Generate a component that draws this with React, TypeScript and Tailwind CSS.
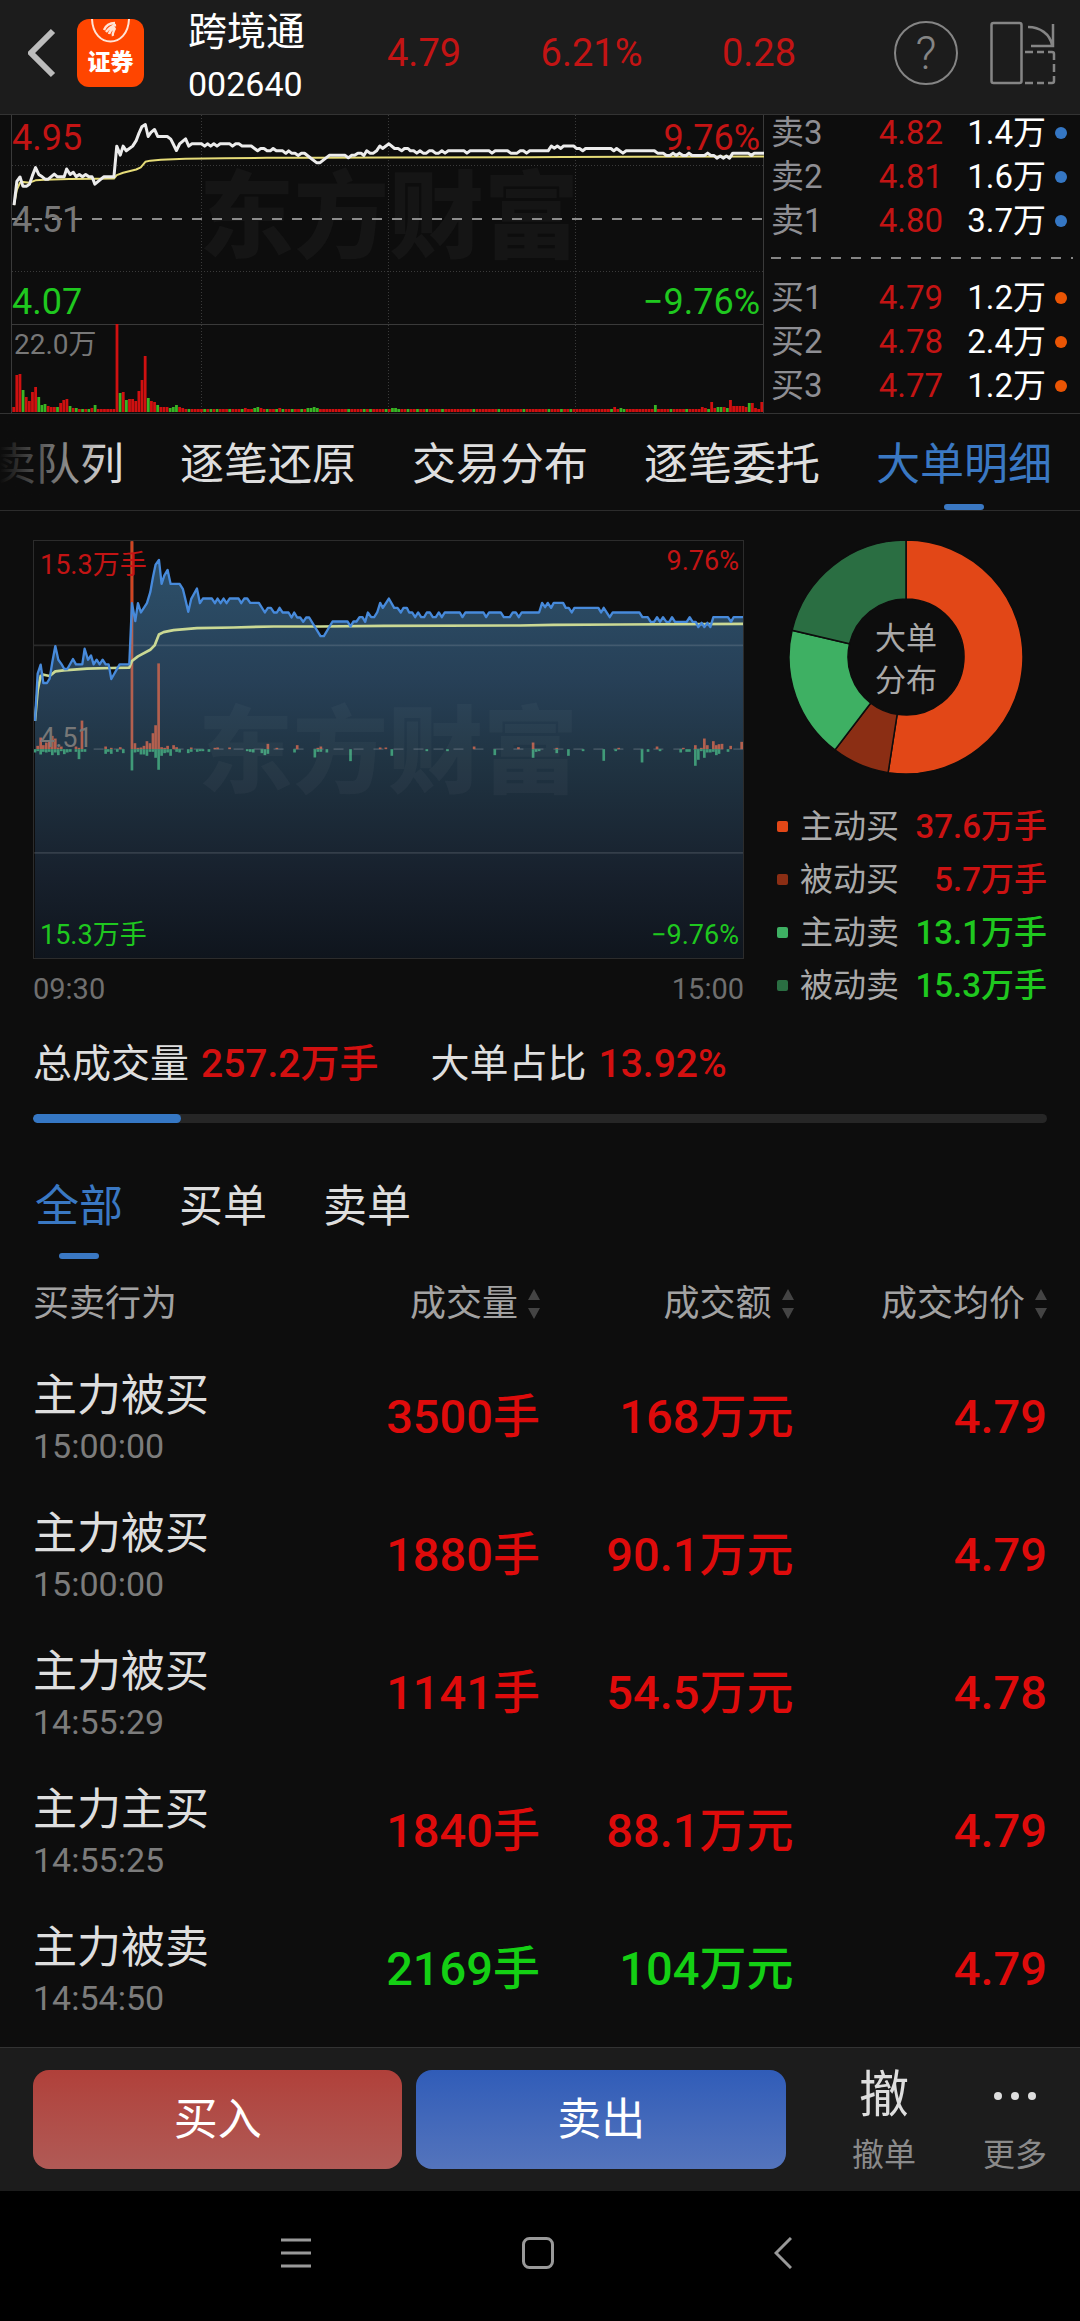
import { useState } from 'react';
import clsx from 'clsx';

type Point = [number, number];

interface Quote {
  label: string;
  price: string;
  amount: string;
  dot: string;
}

interface Deal {
  action: string;
  time: string;
  volume: string;
  turnover: string;
  price: string;
  up: boolean;
}

const sellQuotes: Quote[] = [
  { label: '卖3', price: '4.82', amount: '1.4万', dot: 'bg-[#3577c4]' },
  { label: '卖2', price: '4.81', amount: '1.6万', dot: 'bg-[#3577c4]' },
  { label: '卖1', price: '4.80', amount: '3.7万', dot: 'bg-[#3577c4]' },
];

const buyQuotes: Quote[] = [
  { label: '买1', price: '4.79', amount: '1.2万', dot: 'bg-[#ea5504]' },
  { label: '买2', price: '4.78', amount: '2.4万', dot: 'bg-[#ea5504]' },
  { label: '买3', price: '4.77', amount: '1.2万', dot: 'bg-[#ea5504]' },
];

const sections = ['卖队列', '逐笔还原', '交易分布', '逐笔委托', '大单明细'];
const filters = ['全部', '买单', '卖单'];

const distribution = [
  { label: '主动买', value: 37.6, fill: '#e24717', dot: 'bg-[#e24717]', text: 'text-[#cc1212]' },
  { label: '被动买', value: 5.7, fill: '#8b2e14', dot: 'bg-[#8b2e14]', text: 'text-[#cc1212]' },
  { label: '主动卖', value: 13.1, fill: '#3eb063', dot: 'bg-[#3eb063]', text: 'text-[#1fc81f]' },
  { label: '被动卖', value: 15.3, fill: '#2a6e42', dot: 'bg-[#2a6e42]', text: 'text-[#1fc81f]' },
];

const deals: Deal[] = [
  { action: '主力被买', time: '15:00:00', volume: '3500手', turnover: '168万元', price: '4.79', up: true },
  { action: '主力被买', time: '15:00:00', volume: '1880手', turnover: '90.1万元', price: '4.79', up: true },
  { action: '主力被买', time: '14:55:29', volume: '1141手', turnover: '54.5万元', price: '4.78', up: true },
  { action: '主力主买', time: '14:55:25', volume: '1840手', turnover: '88.1万元', price: '4.79', up: true },
  { action: '主力被卖', time: '14:54:50', volume: '2169手', turnover: '104万元', price: '4.79', up: false },
];

// Plot area shared by both charts: x 41..2169, y 31..1285, previous close at 658
const priceLine: Point[] = [
  [44, 572], [52, 430], [61, 403], [69, 458], [80, 458], [88, 445], [96, 395], [105, 347], [114, 388],
  [124, 402], [132, 416], [141, 416], [158, 386], [167, 402], [186, 402], [193, 355], [203, 388],
  [212, 375], [220, 402], [229, 388], [238, 402], [247, 388], [256, 402], [265, 402], [273, 446],
  [298, 402], [327, 402], [335, 218], [345, 272], [353, 218], [362, 246], [380, 218], [390, 185],
  [398, 140], [406, 102], [416, 88], [424, 160], [432, 135], [442, 118], [451, 160], [478, 160],
  [488, 176], [495, 205], [504, 244], [513, 205], [530, 174], [539, 218], [548, 204], [575, 204],
  [584, 218], [592, 204], [601, 218], [610, 204], [619, 218], [628, 204], [655, 204], [663, 218],
  [672, 204], [681, 204], [690, 217], [716, 217], [734, 246], [743, 232], [752, 232], [761, 246],
  [770, 246], [778, 232], [787, 246], [805, 246], [814, 261], [822, 246], [831, 261], [840, 261],
  [849, 274], [858, 261], [867, 261], [884, 289], [901, 317], [911, 317], [937, 273], [982, 273],
  [991, 288], [1000, 273], [1009, 273], [1018, 260], [1027, 260], [1035, 274], [1043, 246],
  [1053, 260], [1062, 260], [1071, 246], [1080, 217], [1088, 232], [1106, 204], [1122, 232],
  [1132, 232], [1142, 246], [1150, 232], [1160, 232], [1167, 246], [1176, 246], [1185, 260],
  [1194, 246], [1203, 260], [1212, 260], [1220, 246], [1229, 246], [1238, 260], [1247, 260],
  [1256, 246], [1265, 260], [1274, 246], [1319, 246], [1327, 260], [1336, 246], [1390, 246],
  [1398, 260], [1407, 246], [1442, 246], [1451, 260], [1469, 260], [1478, 246], [1487, 246],
  [1496, 260], [1505, 246], [1557, 246], [1566, 217], [1575, 230], [1583, 217], [1593, 232],
  [1601, 217], [1629, 217], [1637, 232], [1646, 232], [1655, 246], [1663, 232], [1735, 232],
  [1743, 246], [1751, 232], [1769, 260], [1778, 246], [1858, 246], [1867, 260], [1883, 260],
  [1892, 274], [1902, 274], [1911, 260], [1920, 274], [1929, 260], [1939, 274], [1948, 274],
  [1956, 260], [1965, 274], [2000, 274], [2009, 260], [2018, 274], [2027, 274], [2035, 290],
  [2045, 277], [2053, 290], [2062, 277], [2071, 290], [2080, 260], [2124, 260], [2133, 274],
  [2141, 260], [2169, 260],
];

const averageLine: Point[] = [
  [44, 572], [52, 480], [61, 437], [70, 433], [88, 437], [105, 423], [130, 420], [200, 415],
  [273, 413], [327, 412], [335, 392], [353, 378], [390, 358], [403, 345], [416, 312], [430, 305],
  [460, 299], [530, 293], [640, 291], [760, 288], [900, 288], [1090, 286], [1500, 285],
  [1600, 283], [1800, 282], [2169, 280],
];

// [x, bought, sold]
const bigOrders: [number, number, number][] = [
  [44, 0, 10], [52, 10, 6], [61, 35, 16], [69, 12, 8], [78, 20, 10], [87, 22, 8], [96, 40, 18],
  [105, 32, 10], [114, 5, 18], [123, 8, 6], [132, 0, 15], [141, 0, 10], [150, 0, 8], [167, 8, 8],
  [176, 4, 30], [185, 86, 8], [194, 0, 8], [256, 8, 14], [264, 0, 8], [273, 4, 14], [291, 0, 8],
  [300, 6, 0], [309, 0, 12], [335, 625, 64], [344, 18, 10], [353, 4, 8], [362, 5, 16],
  [371, 10, 16], [380, 24, 20], [389, 18, 8], [398, 48, 8], [406, 72, 26], [415, 258, 62],
  [424, 6, 20], [433, 4, 12], [442, 10, 10], [451, 0, 20], [460, 12, 0], [469, 6, 8], [478, 0, 10],
  [504, 0, 12], [513, 5, 8], [531, 0, 8], [540, 0, 6], [548, 0, 6], [566, 0, 8], [584, 4, 0],
  [592, 5, 0], [628, 5, 0], [681, 0, 6], [690, 0, 8], [699, 0, 10], [725, 0, 12], [734, 0, 18],
  [743, 16, 14], [770, 4, 0], [823, 0, 10], [831, 12, 0], [884, 0, 25], [893, 4, 8], [902, 8, 8],
  [920, 0, 10], [991, 0, 36], [1080, 5, 0], [1097, 5, 0], [1115, 0, 20], [1220, 0, 6],
  [1282, 0, 6], [1362, 8, 0], [1424, 0, 18], [1495, 6, 0], [1539, 20, 26], [1548, 0, 8],
  [1557, 0, 6], [1610, 4, 12], [1645, 0, 20], [1689, 0, 6], [1751, 0, 35], [1787, 0, 6],
  [1796, 4, 0], [1866, 0, 40], [1884, 0, 8], [1911, 8, 0], [1920, 0, 6], [1982, 0, 10],
  [1990, 4, 0], [2000, 0, 8], [2008, 0, 8], [2026, 12, 50], [2035, 0, 32], [2044, 4, 6],
  [2053, 32, 26], [2062, 12, 10], [2071, 0, 10], [2080, 24, 8], [2089, 12, 18], [2097, 15, 14],
  [2106, 16, 0], [2124, 0, 8], [2132, 10, 0], [2165, 22, 0],
];

// Minute volumes that rise above the floor, by minute of the session
const volumePeaks: Record<number, number> = {
  0: 5, 1: 37, 2: 38, 3: 22, 4: 15, 5: 11, 6: 20, 7: 25, 8: 15, 9: 7, 10: 8, 11: 6, 12: 5, 13: 5,
  14: 5, 15: 9, 16: 12, 17: 13, 18: 6, 19: 4, 20: 4, 25: 4, 26: 7, 33: 88, 34: 19, 35: 20, 36: 12,
  37: 13, 38: 13, 39: 11, 40: 21, 41: 32, 42: 56, 43: 14, 44: 11, 45: 10, 46: 7, 47: 5, 48: 5,
  49: 5, 50: 4, 51: 5, 52: 7, 53: 5, 54: 4, 74: 4, 77: 4, 78: 5, 79: 4, 85: 4, 94: 4, 95: 4, 96: 5,
  97: 4, 121: 4, 122: 4, 192: 5, 194: 4, 205: 7, 220: 5, 221: 4, 223: 10, 224: 4, 225: 5, 226: 5,
  227: 5, 228: 4, 229: 12, 230: 6, 231: 6, 232: 6, 233: 6, 234: 5, 235: 9, 236: 9, 237: 4, 239: 10,
};

const fallingMinutes = new Set([
  3, 8, 9, 10, 14, 18, 20, 22, 24, 26, 34, 36, 43, 46, 50, 51, 52, 56, 61, 63, 65, 69, 73, 77, 78,
  81, 84, 86, 89, 92, 94, 95, 96, 97, 107, 112, 114, 119, 121, 122, 123, 126, 129, 132, 137, 147,
  155, 163, 171, 175, 178, 191, 194, 195, 205, 210, 215, 222, 225, 226, 228, 235,
]);

const toPoints = (line: Point[]) => line.map(([x, y]) => `${x},${y}`).join(' ');

function Watermark({ className }: { className: string }) {
  return (
    <span aria-hidden="true" className={clsx('absolute text-[95px] leading-none font-black whitespace-nowrap', className)}>
      东方财富
    </span>
  );
}

function Header() {
  return (
    <header className="flex h-[115px] items-center border-b border-[#333] bg-[#1c1c1c] pb-2 pl-7 pr-6">
      <button aria-label="返回" className="h-[50px] w-7">
        <svg viewBox="0 0 28 50" className="h-full w-full" fill="none" stroke="#bcbcbc" strokeWidth="6">
          <path d="M25 3 3 25l22 22" />
        </svg>
      </button>
      <div className="relative ml-[21px] flex h-[68px] w-[67px] items-end justify-center overflow-hidden rounded-xl bg-[#ff4500] pb-2.5">
        <svg viewBox="0 0 67 30" className="absolute left-0 top-0 w-full" fill="none" stroke="#ffe3d6" strokeWidth="2">
          <path d="M15 0c1 30 36 30 37 0" />
          <path d="M27 11c2-5 6-7 11-7M29 13c3-4 5-6 10-7M32 15c1-4 3-5 6-7M36 17c-1-3 1-5 2-8" strokeWidth="2.4" />
        </svg>
        <span className="text-[23px] leading-7 font-black text-white">证券</span>
      </div>
      <div className="ml-11 mt-2.5 text-white">
        <h1 className="text-[39px] leading-[52px]">跨境通</h1>
        <p className="text-[34px] leading-[52px]">002640</p>
      </div>
      <div className="flex flex-1 justify-between pl-[82px] pr-[98px] text-[38px] leading-[52px] text-[#c31414]">
        <span>4.79</span>
        <span>6.21%</span>
        <span>0.28</span>
      </div>
      <button aria-label="帮助" className="flex size-16 items-center justify-center rounded-full border-2 border-[#858585] text-[46px] leading-none font-light text-[#858585]">
        ?
      </button>
      <button aria-label="横屏" className="ml-8 h-16 w-[66px]">
        <svg viewBox="0 0 66 64" className="h-full w-full" fill="none" stroke="#858585" strokeWidth="2.5">
          <rect x="1.5" y="2" width="30" height="60" rx="2" />
          <path d="M38 6c12 0 22 7 24 18M63 3v22H41" />
          <path d="M35 31h8M47 31h7M58 31h4q2 0 2 2v6M64 43v8M64 55v5q0 2-2 2h-4M54 62h-7M43 62h-8" />
        </svg>
      </button>
    </header>
  );
}

function MinuteChart() {
  return (
    <div className="relative flex-1 text-[36px] leading-10">
      <Watermark className="left-[199px] top-[56px] text-[#151515]" />
      <svg viewBox="0 0 764 298" preserveAspectRatio="none" className="absolute inset-0 h-full w-full">
        <g stroke="#3a3a3a">
          <path d="M11.5 0v298M763.5 0v298M12 209.5h752" />
          <path d="M201.5 0v298M388.5 0v298M575.5 0v298M12 50.5h752M12 156.5h752" strokeDasharray="1 2" />
        </g>
        <path d="M12 104h752" stroke="#8c8c8c" strokeWidth="2" strokeDasharray="10 10" />
        {Array.from({ length: 240 }, (_, i) => {
          const height = volumePeaks[i] ?? 3;
          return (
            <rect
              key={i}
              x={12.3 + i * 3.13}
              y={297 - height}
              width="2.8"
              height={height}
              fill={fallingMinutes.has(i) ? '#38b424' : '#cf1010'}
            />
          );
        })}
        <g transform="translate(-1.5 -5.2) scale(.353 .1667)" fill="none" strokeWidth="2" strokeLinejoin="round">
          <polyline points={toPoints(averageLine)} stroke="#e6dc78" vectorEffect="non-scaling-stroke" />
          <polyline points={toPoints(priceLine)} stroke="#ececec" strokeWidth="3" vectorEffect="non-scaling-stroke" />
        </g>
      </svg>
      <span className="absolute left-3 top-[3px] text-[#c31414]">4.95</span>
      <span className="absolute left-3 top-[85px] text-[#777]">4.51</span>
      <span className="absolute left-3 top-[167px] text-[#1fc81f]">4.07</span>
      <span className="absolute left-[14px] top-[210px] text-[28px] text-[#777]">22.0万</span>
      <span className="absolute right-1 top-[3px] text-[#c31414]">9.76%</span>
      <span className="absolute right-1 top-[167px] text-[#1fc81f]">−9.76%</span>
    </div>
  );
}

function QuoteRow({ quote }: { quote: Quote }) {
  return (
    <li className="grid grid-cols-[60px_1fr_103px_21px] items-center text-right text-[33px] leading-9">
      <span className="text-left text-[#8e8e93]">{quote.label}</span>
      <span className="text-[#c31414]">{quote.price}</span>
      <span className="text-white">{quote.amount}</span>
      <i className={clsx('size-3 justify-self-end rounded-full', quote.dot)} />
    </li>
  );
}

function QuotePanel() {
  return (
    <section className="flex h-[299px] border-b border-[#333]">
      <MinuteChart />
      <div className="w-[316px] pl-[7px] pr-[13px]">
        <ul className="flex flex-col gap-2">
          {sellQuotes.map((quote) => (
            <QuoteRow key={quote.label} quote={quote} />
          ))}
        </ul>
        <div className="-mr-1.5 mb-[21px] mt-[18px] h-0.5 bg-[repeating-linear-gradient(90deg,#858585_0_10px,transparent_10px_20px)]" />
        <ul className="flex flex-col gap-2">
          {buyQuotes.map((quote) => (
            <QuoteRow key={quote.label} quote={quote} />
          ))}
        </ul>
      </div>
    </section>
  );
}

function SectionTabs() {
  const [current, setCurrent] = useState('大单明细');

  return (
    <nav className="relative flex h-[97px] justify-end gap-14 overflow-hidden border-b border-[#2c2c2c] pr-7 text-[44px]">
      {sections.map((section) => (
        <button
          key={section}
          onClick={() => setCurrent(section)}
          className={clsx('relative shrink-0 pt-1.5', current === section ? 'text-[#3a78c3]' : 'text-[#dedede]')}
        >
          {section}
          {current === section && (
            <span className="absolute bottom-0 left-1/2 h-1.5 w-10 -translate-x-1/2 rounded-full bg-[#3a78c3]" />
          )}
        </button>
      ))}
      <div className="pointer-events-none absolute inset-y-0 left-0 w-28 bg-linear-to-r from-[#0d0d0d] to-transparent" />
    </nav>
  );
}

function OrderChart() {
  return (
    <div className="min-w-0 flex-1">
      <div className="relative h-[419px] border border-[#2c2c2c] text-[27px] leading-9">
        <svg viewBox="41 31 2128 1254" preserveAspectRatio="none" className="absolute inset-0 h-full w-full">
          <defs>
            <linearGradient id="area" x1="0" y1="0" x2="0" y2="1">
              <stop offset="0" stopColor="#2d506a" />
              <stop offset="0.3" stopColor="#274057" />
              <stop offset="0.5" stopColor="#203443" />
              <stop offset="0.8" stopColor="#17202c" />
              <stop offset="1" stopColor="#0f151d" />
            </linearGradient>
          </defs>
          <polygon points={`44,1285 ${toPoints(priceLine)} 2169,1285`} fill="url(#area)" />
          <path d="M41 345h2128M41 969h2128" stroke="#fff" strokeOpacity=".12" strokeWidth="5" />
          <path d="M220 657h1949" stroke="#fff" strokeOpacity=".14" strokeWidth="5" strokeDasharray="30 30" />
          {bigOrders.map(([x, bought, sold]) => (
            <g key={x}>
              <rect x={x - 4} y={657 - bought} width="8" height={bought} fill="#b3604f" />
              <rect x={x - 4} y="657" width="8" height={sold} fill="#409a78" />
            </g>
          ))}
          <rect x="331" y="32" width="8" height="186" fill="#cf4522" />
          <g fill="none" strokeLinejoin="round">
            <polyline points={toPoints(averageLine)} stroke="#cbd994" strokeWidth="8" />
            <polyline points={toPoints(priceLine)} stroke="#478adb" strokeWidth="7" />
          </g>
        </svg>
        <Watermark className="left-[164px] top-[165px] text-white/3" />
        <span className="absolute left-1.5 top-[6px] text-[#c31414]">15.3万手</span>
        <span className="absolute left-1.5 top-[179px] text-[#777]">4.51</span>
        <span className="absolute bottom-[5px] left-1.5 text-[#1fc81f]">15.3万手</span>
        <span className="absolute right-1 top-0.5 text-[#c31414]">9.76%</span>
        <span className="absolute bottom-[5px] right-1 text-[#1fc81f]">−9.76%</span>
      </div>
      <div className="mt-3 flex justify-between text-[29px] leading-9 text-[#6f6f6f]">
        <span>09:30</span>
        <span>15:00</span>
      </div>
    </div>
  );
}

function Donut() {
  const total = distribution.reduce((sum, item) => sum + item.value, 0);
  let start = 0;

  const slices = distribution.map((item) => {
    const from = start;
    start += (item.value / total) * Math.PI * 2;
    const at = (angle: number, r: number) => `${117 + r * Math.sin(angle)} ${117 - r * Math.cos(angle)}`;
    const large = start - from > Math.PI ? 1 : 0;
    return {
      fill: item.fill,
      d: `M${at(from, 117)}A117 117 0 ${large} 1 ${at(start, 117)}L${at(start, 58)}A58 58 0 ${large} 0 ${at(from, 58)}Z`,
    };
  });

  return (
    <div className="relative mx-auto flex size-[234px] items-center justify-center">
      <svg viewBox="0 0 234 234" className="absolute inset-0 h-full w-full">
        {slices.map((slice) => (
          <path key={slice.fill} d={slice.d} fill={slice.fill} stroke="#0d0d0d" strokeWidth="1.5" />
        ))}
      </svg>
      <p className="relative pt-1.5 text-center text-[31px] leading-[42px] text-[#a9a9a9]">
        大单
        <br />
        分布
      </p>
    </div>
  );
}

function Distribution() {
  return (
    <div className="w-[282px]">
      <Donut />
      <ul className="mt-[26px] pl-3 text-[33px] leading-[53px]">
        {distribution.map((item) => (
          <li key={item.label} className="flex items-center">
            <i className={clsx('size-[11px] rounded-xs', item.dot)} />
            <span className="ml-3 text-[#a9a9a9]">{item.label}</span>
            <span className={clsx('ml-auto font-medium', item.text)}>{item.value.toFixed(1)}万手</span>
          </li>
        ))}
      </ul>
    </div>
  );
}

function Summary() {
  return (
    <section className="mt-7 px-[33px]">
      <div className="flex gap-[52px] text-[39px] leading-[48px] text-[#dedede]">
        <p className="flex gap-3">
          总成交量<span className="font-medium text-[#d31010]">257.2万手</span>
        </p>
        <p className="flex gap-3">
          大单占比<span className="font-medium text-[#d31010]">13.92%</span>
        </p>
      </div>
      <div className="mt-[26px] h-[9px] overflow-hidden rounded-full bg-[#262626]">
        <div className="h-full w-[14.6%] rounded-full bg-[#3577c4]" />
      </div>
    </section>
  );
}

function SortIcon() {
  return (
    <svg viewBox="0 0 12 30" className="w-3" fill="#444">
      <path d="M6 0l6 11H0zM6 30l6-11H0z" />
    </svg>
  );
}

function DealList() {
  const [filter, setFilter] = useState('全部');

  return (
    <section className="px-[33px] pb-[9px]">
      <div className="mt-14 flex gap-14 pl-0.5 text-[44px] leading-[56px]">
        {filters.map((name) => (
          <button
            key={name}
            onClick={() => setFilter(name)}
            className={clsx('flex flex-col items-center gap-[18px]', filter === name ? 'text-[#3a78c3]' : 'text-[#dedede]')}
          >
            {name}
            <span className={clsx('h-1.5 w-10 rounded-full', filter === name && 'bg-[#3a78c3]')} />
          </button>
        ))}
      </div>
      <table className="w-full table-fixed text-right">
        <thead>
          <tr className="h-[89px] text-[36px] text-[#a2a2a2]">
            <th className="text-left font-normal">买卖行为</th>
            {['成交量', '成交额', '成交均价'].map((title) => (
              <th key={title} className="font-normal">
                <button className="inline-flex items-center gap-2.5 whitespace-nowrap">
                  {title}
                  <SortIcon />
                </button>
              </th>
            ))}
          </tr>
        </thead>
        <tbody>
          {deals.map((deal, index) => (
            <tr key={index} className="h-[138px] text-[47px] font-medium whitespace-nowrap">
              <td className="text-left font-normal">
                <div className="text-[44px] leading-[56px] text-[#dedede]">{deal.action}</div>
                <div className="mt-0.5 text-[34px] leading-10 text-[#7c7c7c]">{deal.time}</div>
              </td>
              <td className={deal.up ? 'text-[#de0b0b]' : 'text-[#14d014]'}>{deal.volume}</td>
              <td className={deal.up ? 'text-[#de0b0b]' : 'text-[#14d014]'}>{deal.turnover}</td>
              <td className="text-[#de0b0b]">{deal.price}</td>
            </tr>
          ))}
        </tbody>
      </table>
    </section>
  );
}

function TradeBar() {
  return (
    <footer className="flex h-[144px] items-center border-t border-[#333] bg-[#1c1c1c] px-[33px] text-white">
      <button className="h-[99px] flex-1 rounded-2xl bg-linear-to-b from-[#b0403a] to-[#b05a56] text-[44px]">买入</button>
      <button className="ml-3.5 h-[99px] flex-1 rounded-2xl bg-linear-to-b from-[#305cb8] to-[#5474bc] text-[44px]">卖出</button>
      <button className="ml-[66px] flex flex-col items-center pt-2.5 text-[#dedede]">
        <span className="text-[50px] leading-[60px]">撤</span>
        <span className="text-[32px] leading-[60px] text-[#8a8a8a]">撤单</span>
      </button>
      <button className="ml-[67px] flex flex-col items-center pt-2.5">
        <svg viewBox="0 0 44 60" className="h-[60px] w-11" fill="#dedede">
          <circle cx="5" cy="31" r="4" />
          <circle cx="22" cy="31" r="4" />
          <circle cx="39" cy="31" r="4" />
        </svg>
        <span className="text-[32px] leading-[60px] text-[#8a8a8a]">更多</span>
      </button>
    </footer>
  );
}

function SystemBar() {
  return (
    <nav className="grid h-[130px] grid-cols-[1fr_210px_32px_220px_1fr] items-center bg-black pb-1.5 pl-1.5">
      <button aria-label="最近任务" className="justify-self-end">
        <svg viewBox="0 0 32 32" className="size-8" stroke="#999" strokeWidth="3">
          <path d="M1 3h30M1 16h30M1 29h30" />
        </svg>
      </button>
      <span />
      <button aria-label="主屏幕">
        <svg viewBox="0 0 32 32" className="size-8" fill="none" stroke="#999" strokeWidth="3">
          <rect x="1.5" y="1.5" width="29" height="29" rx="6" />
        </svg>
      </button>
      <span />
      <button aria-label="后退" className="justify-self-start">
        <svg viewBox="0 0 18 32" className="h-8 w-[18px]" fill="none" stroke="#999" strokeWidth="3">
          <path d="M17 1 2 16l15 15" />
        </svg>
      </button>
    </nav>
  );
}

export default function App() {
  return (
    <div className="min-h-screen bg-[#0d0d0d] font-[Roboto,'Noto_Sans_CJK_SC',sans-serif]">
      <Header />
      <QuotePanel />
      <SectionTabs />
      <section className="mt-[29px] flex gap-[21px] px-[33px]">
        <OrderChart />
        <Distribution />
      </section>
      <Summary />
      <DealList />
      <TradeBar />
      <SystemBar />
    </div>
  );
}
